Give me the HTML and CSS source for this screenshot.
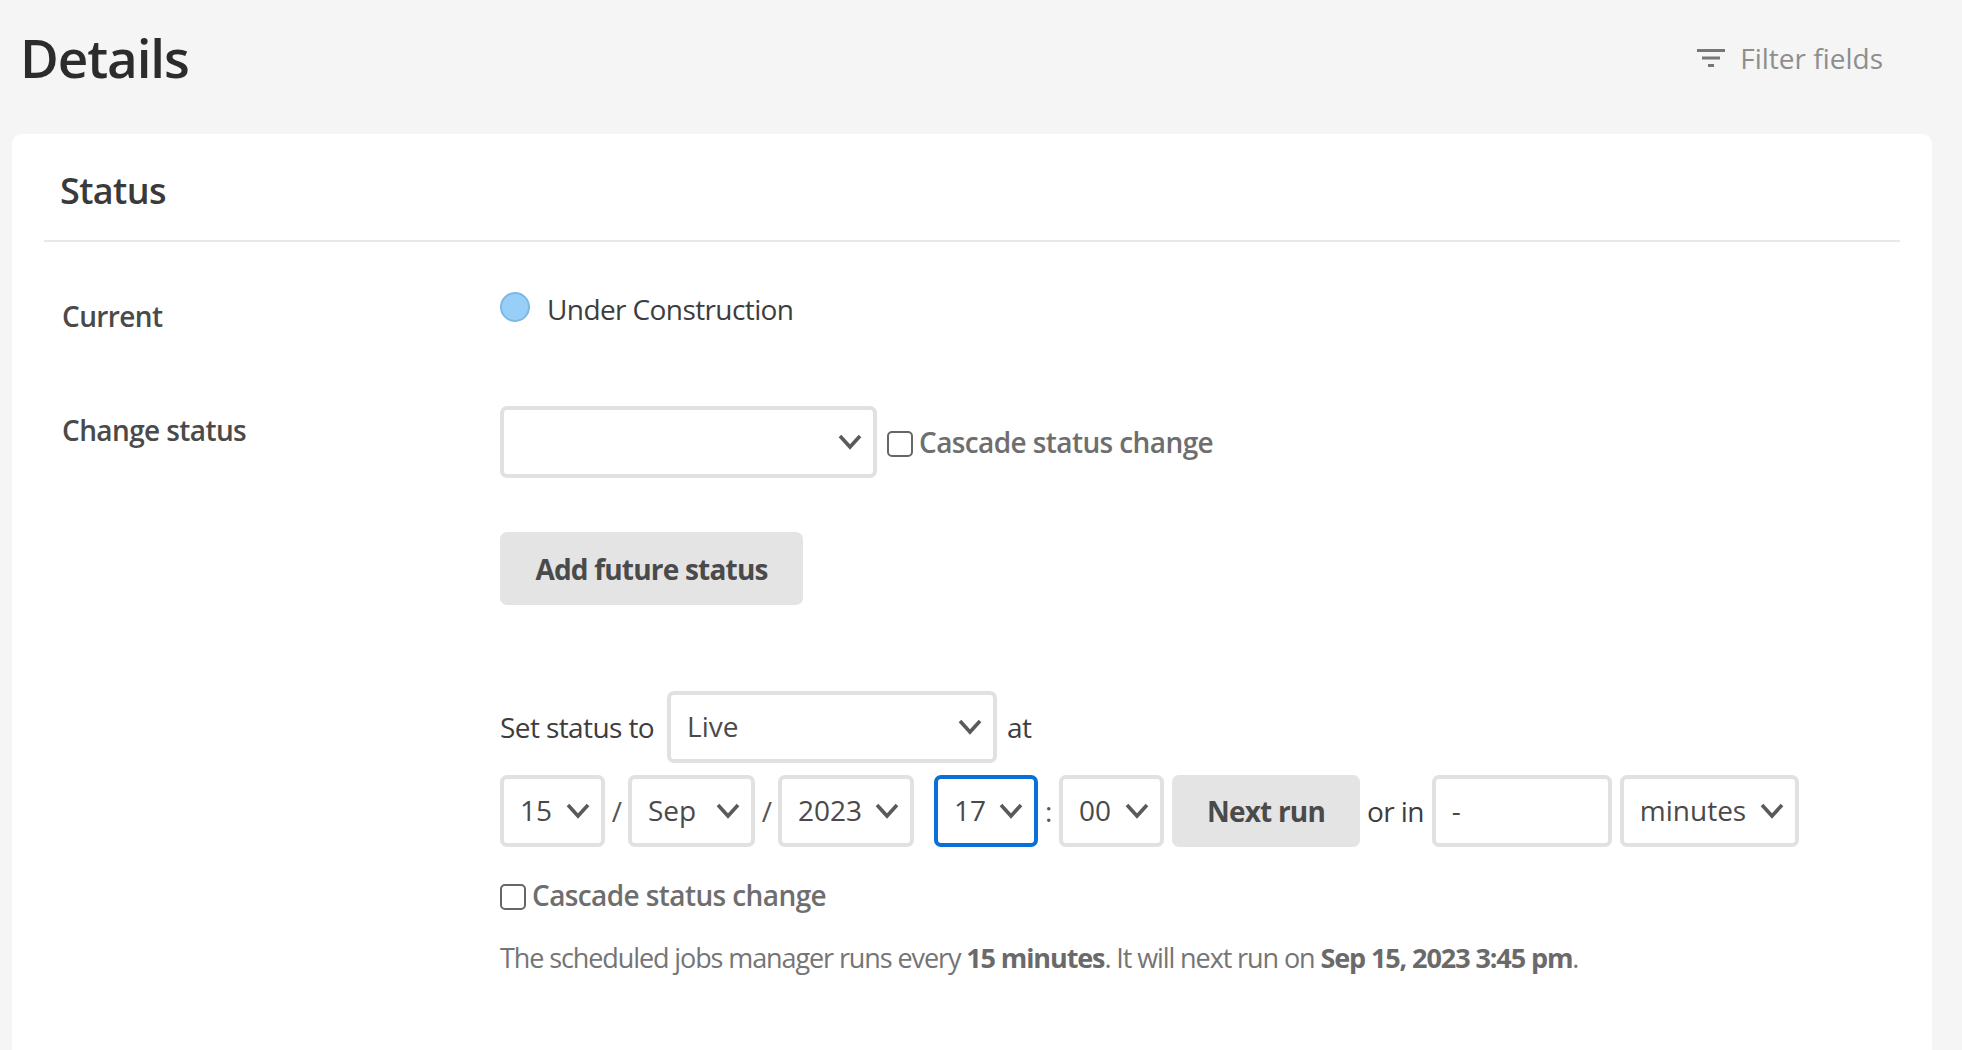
FILE: index.html
```html
<!DOCTYPE html>
<html lang="en">
<head>
<meta charset="utf-8">
<title>Details</title>
<link rel="stylesheet" href="styles.css">
</head>
<body>
<header class="page-head">
  <h1 class="page-title">Details</h1>
  <div class="filter">
    <svg class="filter-icon" viewBox="0 0 28 20" width="28" height="20" aria-hidden="true"><path d="M0 1h28v3H0zM5 8.5h18v3H5zM11 16h6v3h-6z"/></svg>
    <span>Filter fields</span>
  </div>
</header>
<main class="card">
  <h2 class="card-title">Status</h2>
  <div class="field field-current">
    <div class="field-label">Current</div>
    <div class="current-value"><span class="dot"></span><span class="current-text">Under Construction</span></div>
  </div>
  <div class="field field-change">
    <div class="field-label label-change">Change status</div>
    <div class="field-body">
      <div class="row">
        <span class="sel w-status"><select><option></option></select><svg class="chev" viewBox="0 0 24 16"><path d="M2 2l10 11L22 2"/></svg></span>
        <label class="cascade cascade-first"><input type="checkbox"><span>Cascade status change</span></label>
      </div>
      <button class="btn btn-add" type="button">Add future status</button>
      <div class="row row-set">
        <span class="txt">Set status to</span>
        <span class="sel w-live"><select><option>Live</option></select><svg class="chev" viewBox="0 0 24 16"><path d="M2 2l10 11L22 2"/></svg></span>
        <span class="txt">at</span>
      </div>
      <div class="row row-date">
        <span class="sel w-day"><select><option>15</option></select><svg class="chev" viewBox="0 0 24 16"><path d="M2 2l10 11L22 2"/></svg></span>
        <span class="sep sep-slash">/</span>
        <span class="sel w-mon"><select><option>Sep</option></select><svg class="chev" viewBox="0 0 24 16"><path d="M2 2l10 11L22 2"/></svg></span>
        <span class="sep sep-slash">/</span>
        <span class="sel w-year"><select><option>2023</option></select><svg class="chev" viewBox="0 0 24 16"><path d="M2 2l10 11L22 2"/></svg></span>
        <span class="sel w-hour focus"><select><option>17</option></select><svg class="chev" viewBox="0 0 24 16"><path d="M2 2l10 11L22 2"/></svg></span>
        <span class="sep sep-colon">:</span>
        <span class="sel w-min"><select><option>00</option></select><svg class="chev" viewBox="0 0 24 16"><path d="M2 2l10 11L22 2"/></svg></span>
        <button class="btn btn-next" type="button">Next run</button>
        <span class="txt or-in">or in</span>
        <input class="num" type="text" value="-">
        <span class="sel w-unit"><select><option>minutes</option></select><svg class="chev" viewBox="0 0 24 16"><path d="M2 2l10 11L22 2"/></svg></span>
      </div>
      <label class="cascade cascade-second"><input type="checkbox"><span>Cascade status change</span></label>
      <p class="note">The scheduled jobs manager runs every <b>15 minutes</b>. It will next run on <b>Sep 15, 2023 3:45 pm</b>.</p>
    </div>
  </div>
</main>
</body>
</html>
```
FILE: styles.css
```css
* { box-sizing: border-box; }
html, body { margin: 0; height: 1050px; overflow: hidden; }
body {
  background: #f5f5f5;
  font-family: "Open Sans", "Noto Sans", sans-serif;
  font-size: 28px;
  color: #3d3d3d;
  letter-spacing: -0.6px;
}
.page-head {
  height: 134px;
  display: flex;
  align-items: flex-start;
  justify-content: space-between;
  padding: 23px 72px 0 20px;
}
.page-title { margin: 0; font-size: 53px; line-height: 70px; font-weight: 600; color: #2c2c2c; letter-spacing: -1.1px; }
.filter { display: flex; align-items: center; gap: 15px; height: 70px; color: #8e8e8e; font-size: 28px; letter-spacing: 0; margin-right: 7px; }
.filter-icon { fill: #777; }
.card {
  margin-left: 12px;
  width: 1920px;
  height: 916px;
  background: #fff;
  border-radius: 10px 10px 0 0;
  padding: 0 32px;
}
.card-title {
  margin: 0;
  height: 108px;
  padding: 32px 16px 0;
  font-size: 36px;
  line-height: 50px;
  font-weight: 600;
  color: #3a3a3a;
  letter-spacing: -0.6px;
  border-bottom: 2px solid #e8e8e8;
}
.field { display: grid; grid-template-columns: 438px 1fr; padding-left: 18px; }
.field-label { font-weight: 600; color: #4a4a4a; }
.field-current { padding-top: 50px; height: 164px; }
.field-current .field-label { line-height: 36px; padding-top: 6px; }
.current-value { display: flex; align-items: flex-start; gap: 17px; line-height: 36px; }
.current-text { margin-top: -1px; }
.dot { width: 30px; height: 30px; border-radius: 50%; background: #97cff9; border: 2px solid #7db7e4; }
.label-change { line-height: 36px; padding-top: 6px; }
.field-body { min-width: 0; }
.row { display: flex; align-items: center; }
.sel { position: relative; display: block; height: 72px; flex: none; }
.sel select {
  appearance: none;
  width: 100%;
  height: 100%;
  border: 4px solid #e1e1e1;
  border-radius: 7px;
  background: #fff;
  padding: 0 0 2px 16px;
  font: inherit;
  letter-spacing: 0;
  color: #4a4a4a;
}
.sel.focus select { border-color: #0a6fd6; }
.chev { position: absolute; right: 15px; top: 28px; width: 24px; height: 16px; pointer-events: none; }
.chev path { fill: none; stroke: #5a5a5a; stroke-width: 3.6; }
.w-status { width: 377px; }
.w-live { width: 330px; margin: 0 10px 0 13px; }
.w-day { width: 105px; }
.w-mon { width: 127px; }
.w-year { width: 136px; }
.w-hour { width: 104px; margin-left: 20px; }
.w-min { width: 105px; }
.w-unit { width: 179px; margin-left: 8px; }
.sep { flex: none; text-align: center; font-size: 28px; color: #555; }
.sep-slash { width: 23px; }
.sep-colon { width: 21px; }
.txt { flex: none; }
.cascade { display: flex; align-items: center; gap: 6px; font-weight: 600; color: #6e6e6e; }
.cascade input {
  appearance: none;
  margin: 3px 0 0;
  width: 26px;
  height: 26px;
  border: 2px solid #666;
  border-radius: 5px;
  background: #fff;
  flex: none;
}
.cascade-first { margin-left: 10px; }
.cascade-second { margin-top: 30px; line-height: 36px; }
.btn {
  appearance: none;
  border: 0;
  background: #e4e4e4;
  border-radius: 7px;
  font: inherit;
  font-weight: 700;
  letter-spacing: -0.8px;
  color: #4a4a4a;
  padding: 0;
  flex: none;
}
.btn-add { display: block; width: 303px; height: 73px; margin-top: 54px; }
.row-set { margin-top: 86px; }
.row-date { margin-top: 12px; }
.btn-next { width: 188px; height: 72px; margin-left: 8px; }
.or-in { margin: 0 8px 0 7px; }
.num {
  width: 180px;
  height: 72px;
  border: 4px solid #e1e1e1;
  border-radius: 7px;
  padding: 0 16px 2px;
  font: inherit;
  color: #4a4a4a;
  flex: none;
}
.note { margin: 27px 0 0; font-size: 27px; line-height: 36px; letter-spacing: -1.1px; color: #757575; }
.note b { font-weight: 700; color: #6a6a6a; }
```
